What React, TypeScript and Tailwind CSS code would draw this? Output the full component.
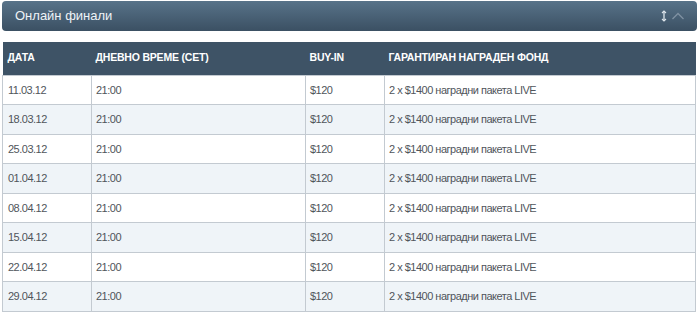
const rows = [
  '11.03.12',
  '18.03.12',
  '25.03.12',
  '01.04.12',
  '08.04.12',
  '15.04.12',
  '22.04.12',
  '29.04.12',
];

function SortIcon() {
  return (
    <svg width="8" height="14" viewBox="0 0 8 14" fill="none" className="text-[#dfe6ec]">
      <path d="M4 2v10" stroke="currentColor" strokeWidth="1.3" />
      <path d="M2 4l2-2 2 2M2 10l2 2 2-2" stroke="currentColor" strokeWidth="1.1" />
    </svg>
  );
}

function ChevronUp() {
  return (
    <svg width="14" height="10" viewBox="0 0 14 10" fill="none" className="text-[#7f91a2]">
      <path d="M1.5 8L7 2.5 12.5 8" stroke="currentColor" strokeWidth="1.3" />
    </svg>
  );
}

export default function App() {
  return (
    <div className="h-[317px] w-[700px] bg-white px-[2px] pt-[1px] font-['Liberation_Sans',Arial,sans-serif]">
      <div className="mr-[1px] flex h-[30px] items-center justify-between rounded-[4px] bg-gradient-to-b from-[#587389] to-[#3b5063] pl-[13px] pr-[12px]">
        <span className="text-[13px] text-[#eef3f7]">Онлайн финали</span>
        <div className="flex items-center gap-[3px]">
          <SortIcon />
          <ChevronUp />
        </div>
      </div>

      <table className="mt-[11px] w-[694px] table-fixed border-collapse text-[11px] tracking-[-0.5px]">
        <colgroup>
          <col className="w-[89px]" />
          <col className="w-[214px]" />
          <col className="w-[79px]" />
          <col />
        </colgroup>
        <thead>
          <tr className="h-[33px] bg-[#3e5366] text-left text-[10.5px] tracking-[-0.2px] text-white">
            <th className="pl-[5px] font-bold">ДАТА</th>
            <th className="pl-[4px] font-bold">ДНЕВНО ВРЕМЕ (CET)</th>
            <th className="pl-[4px] font-bold">BUY-IN</th>
            <th className="pl-[4px] font-bold">ГАРАНТИРАН НАГРАДЕН ФОНД</th>
          </tr>
        </thead>
        <tbody className="text-[#50555b]">
          {rows.map((date, index) => (
            <tr
              key={date}
              className={`h-[29.5px] ${index % 2 === 1 ? 'bg-[#eff4f8]' : 'bg-white'}`}
            >
              <td className="border border-[#c3cad1] pl-[5px]">{date}</td>
              <td className="border border-[#c3cad1] pl-[4px]">21:00</td>
              <td className="border border-[#c3cad1] pl-[4px]">$120</td>
              <td className="border border-[#c3cad1] pl-[4px]">2 x $1400 наградни пакета LIVE</td>
            </tr>
          ))}
        </tbody>
      </table>
    </div>
  );
}
